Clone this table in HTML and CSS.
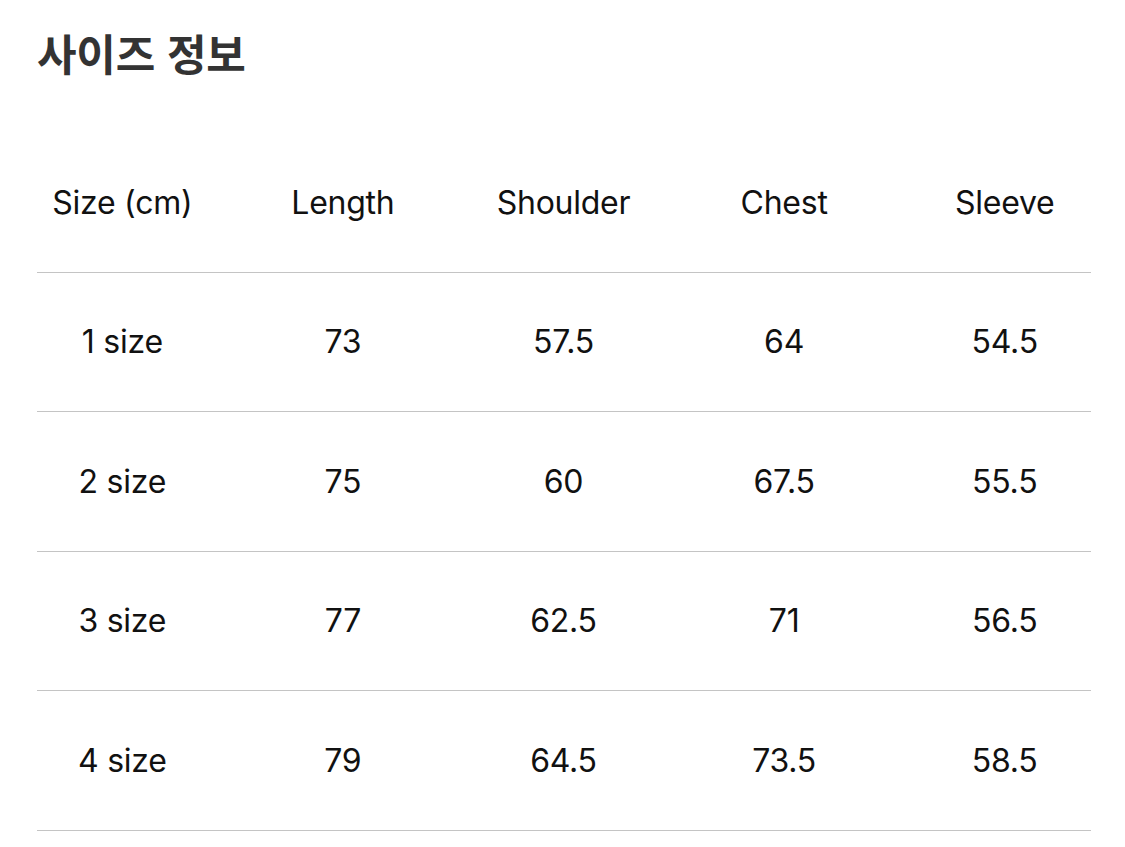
FILE: index.html
```html
<!DOCTYPE html>
<html lang="ko">
<head>
<meta charset="utf-8">
<link rel="stylesheet" href="styles.css">
</head>
<body>
<div class="page">
  <h1 class="title">사이즈 정보</h1>
  <div class="table">
    <div class="row head">
      <div class="cells"><span>Size (cm)</span><span>Length</span><span>Shoulder</span><span>Chest</span><span>Sleeve</span></div>
    </div>
    <div class="row">
      <div class="cells"><span>1 size</span><span>73</span><span>57.5</span><span>64</span><span>54.5</span></div>
    </div>
    <div class="row">
      <div class="cells"><span>2 size</span><span>75</span><span>60</span><span>67.5</span><span>55.5</span></div>
    </div>
    <div class="row">
      <div class="cells"><span>3 size</span><span>77</span><span>62.5</span><span>71</span><span>56.5</span></div>
    </div>
    <div class="row">
      <div class="cells"><span>4 size</span><span>79</span><span>64.5</span><span>73.5</span><span>58.5</span></div>
    </div>
  </div>
</div>
</body>
</html>
```

FILE: styles.css
```css
html, body {
  margin: 0;
  padding: 0;
  background: #ffffff;
}
.page {
  padding: 0 34px 0 37px;
  font-family: Inter, "Noto Sans CJK KR", sans-serif;
}
.title {
  margin: 0;
  padding-top: 24px;
  height: 108px;
  box-sizing: border-box;
  font-family: "Noto Sans CJK KR", sans-serif;
  font-size: 43px;
  font-weight: 700;
  line-height: 56px;
  color: #333333;
  letter-spacing: -0.2px;
}
.row {
  height: 139.5px;
  border-bottom: 1px solid #c4c4c4;
  box-sizing: border-box;
}
.row.head {
  margin-top: 25px;
}
.cells {
  display: grid;
  grid-template-columns: repeat(5, 1fr);
  margin: 0 -24px 0 -25px;
  height: 100%;
  align-items: center;
  text-align: center;
  font-size: 32px;
  color: #111111;
  letter-spacing: -0.25px;
}
```
